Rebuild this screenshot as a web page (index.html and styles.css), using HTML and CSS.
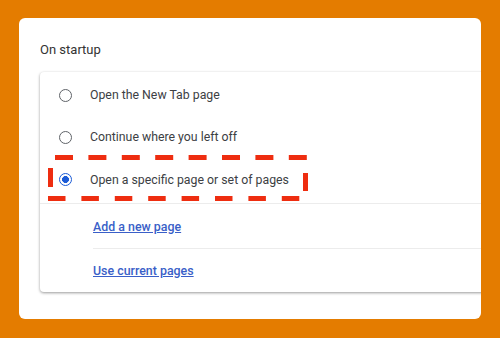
FILE: index.html
```html
<!DOCTYPE html>
<html lang="en">
<head>
  <meta charset="UTF-8" />
  <meta name="viewport" content="width=device-width, initial-scale=1.0" />
  <title>On startup</title>
  <link rel="stylesheet" href="styles.css">
</head>
<body>
  <div class="card">
    <div class="title">On startup</div>

    <div class="options">
      <div class="row">
        <span class="radio"></span>
        <span class="label">Open the New Tab page</span>
      </div>
      <div class="row">
        <span class="radio"></span>
        <span class="label">Continue where you left off</span>
      </div>
      <div class="row row-checked">
        <span class="radio checked"></span>
        <span class="label">Open a specific page or set of pages</span>
      </div>
      <div class="sub-row"><a href="#">Add a new page</a></div>
      <div class="sub-row"><a href="#">Use current pages</a></div>
    </div>
  </div>

  <!-- red dashed highlight drawn over the screenshot -->
  <svg class="highlight" width="500" height="338" viewBox="0 0 500 338">
    <line x1="55" y1="157.5" x2="308" y2="157.5" stroke="#ee2d10" stroke-width="5" stroke-dasharray="18 15.4" />
    <line x1="48" y1="198.5" x2="300" y2="198.5" stroke="#ee2d10" stroke-width="5" stroke-dasharray="17.5 15.9" />
    <rect x="48" y="168" width="5" height="19" fill="#ee2d10" />
    <rect x="303" y="173" width="5" height="18" fill="#ee2d10" />
  </svg>
</body>
</html>
```

FILE: styles.css
```css
* {
  box-sizing: border-box;
}

body {
  margin: 0;
  width: 500px;
  height: 338px;
  overflow: hidden;
  background: #e47c00;
  font-family: Roboto, "Liberation Sans", Arial, sans-serif;
  color: #3c4043;
}

.card {
  margin: 18px 0 0 19px;
  width: 462px;
  height: 301px;
  padding: 24px 0 0 21px;
  background: #fff;
  border-radius: 6px;
  overflow: hidden;
}

.title {
  font-size: 13px;
  line-height: 16px;
  color: #333;
}

.options {
  margin-top: 14px;
  width: 480px;
  height: 220px;
  padding-top: 2px;
  background: #fff;
  border-radius: 4px;
  box-shadow: 0 1px 3px rgba(0, 0, 0, 0.4);
}

.row {
  display: flex;
  align-items: center;
  height: 42px;
  padding-left: 19px;
  font-size: 12.3px;
}

.row-checked {
  height: 46px;
  border-bottom: 1px solid #ececec;
}

.row-checked .label {
  margin-top: -2px;
}

.radio {
  width: 13px;
  height: 13px;
  border: 1.6px solid #5f6368;
  border-radius: 50%;
  margin-right: 18px;
  flex-shrink: 0;
}

.radio.checked {
  border-color: #1b5bd6;
  background: radial-gradient(circle, #1b5bd6 0 3.2px, #fff 3.7px);
  margin-top: -2px;
}

.label {
  color: #3c4043;
}

.sub-row {
  display: flex;
  align-items: center;
  height: 44px;
  margin-left: 53px;
  font-size: 12.4px;
}

.sub-row + .sub-row {
  border-top: 1px solid #ececec;
  height: 43px;
}

.sub-row a {
  color: #3a5fc8;
  font-weight: 500;
  text-decoration: underline;
}

.highlight {
  position: absolute;
  left: 0;
  top: 0;
}
```
